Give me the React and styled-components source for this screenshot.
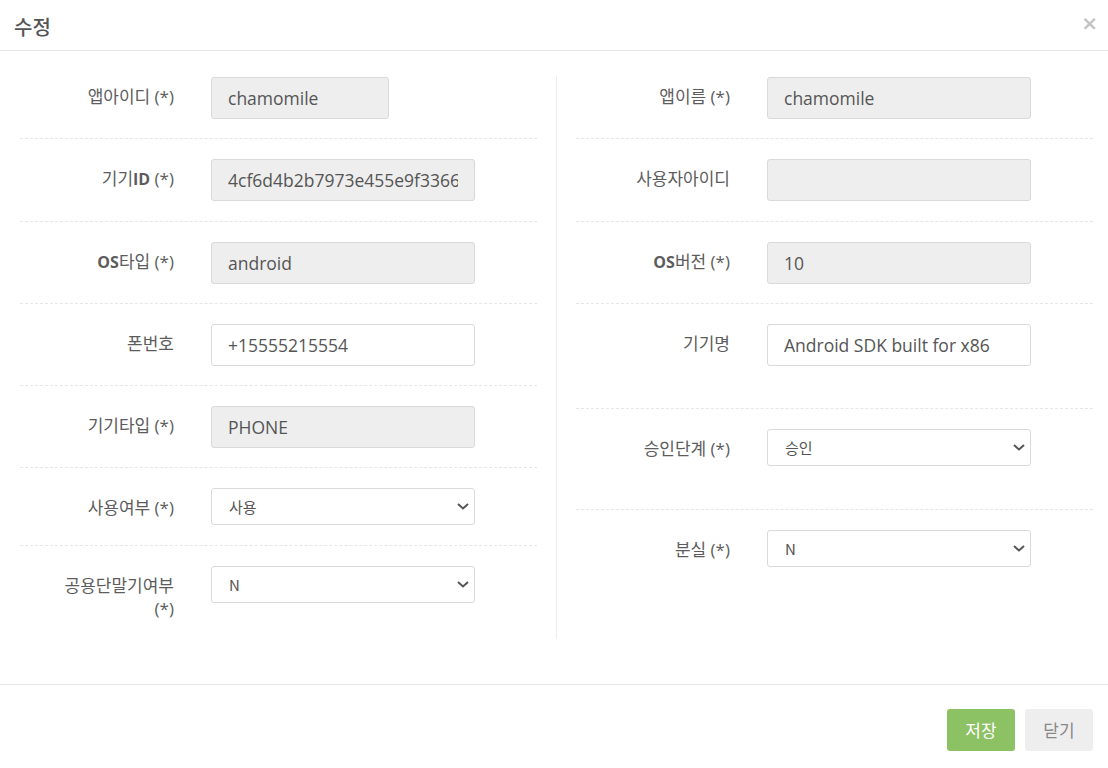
import styled, { createGlobalStyle } from "styled-components";

const GlobalStyle = createGlobalStyle`
    body {
        margin: 0;
        background: #fff;
        font-family: "Open Sans", "Noto Sans CJK KR", sans-serif;
        color: #555;
    }
`

const Modal = styled.div`
    width: 1108px;
    height: 768px;
    display: flex;
    flex-direction: column;
    overflow: hidden;

    & > * {
        flex-shrink: 0;
    }
`

const Header = styled.div`
    box-sizing: border-box;
    height: 51px;
    display: flex;
    align-items: center;
    justify-content: space-between;
    padding: 2px 10px 0 14px;
    border-bottom: 1px solid #e5e5e5;
`

const Title = styled.h4`
    margin: 0;
    font-family: "Noto Sans CJK KR", sans-serif;
    font-size: 20px;
    font-weight: 500;
    color: #555;
`

const CloseButton = styled.button`
    border: none;
    background: none;
    padding: 0;
    margin-top: -6px;
    font-family: "DejaVu Sans", sans-serif;
    font-size: 20px;
    font-weight: bold;
    line-height: 1;
    color: #c4c4c4;
    cursor: pointer;
`

const Body = styled.div`
    display: grid;
    grid-template-columns: 1fr 1px 1fr;
    column-gap: 19px;
    padding: 26px 15px 45px 20px;
`

const Divider = styled.div`
    background: #eeeeee;
    margin-top: -1px;
`

const Column = styled.div`
    display: flex;
    flex-direction: column;
`

const Row = styled.div`
    display: flex;
    align-items: flex-start;
    padding: 20px 0 ${props => props.$extra ? '42.5px' : '19.25px'};

    &:first-child {
        padding-top: 0;
    }

    & + & {
        border-top: 1px dashed #e6e6e6;
    }
`

const Label = styled.label`
    box-sizing: border-box;
    width: 124px;
    margin: 0 37px 0 30px;
    flex-shrink: 0;
    padding-top: 8px;
    text-align: right;
    font-size: 17px;
    line-height: 23px;
    color: #5c5c5c;

    & b {
        font-weight: 700;
        font-size: 16px;
    }
`

const Field = styled.input`
    box-sizing: border-box;
    width: ${props => props.$narrow ? '178px' : '264px'};
    height: 42px;
    padding: 0 16px;
    border: 1px solid #d9d9d9;
    border-radius: 3px;
    background: ${props => props.readOnly ? '#eeeeee' : '#fff'};
    font-family: "Open Sans", sans-serif;
    font-size: 17.5px;
    color: #555;
    outline: none;
`

const SelectWrap = styled.div`
    position: relative;
    width: 264px;

    & svg {
        position: absolute;
        right: 6px;
        top: 15px;
        pointer-events: none;
    }
`

const Select = styled.select`
    appearance: none;
    box-sizing: border-box;
    width: 100%;
    height: 37px;
    padding: 0 30px 0 17px;
    border: 1px solid #d9d9d9;
    border-radius: 3px;
    background: #fff;
    font-family: "Noto Sans CJK KR", sans-serif;
    font-size: 15px;
    color: #555;
    outline: none;
`

const Footer = styled.div`
    display: flex;
    justify-content: flex-end;
    gap: 10px;
    padding: 24px 15px;
    border-top: 1px solid #e5e5e5;
`

const Button = styled.button`
    width: 68px;
    height: 42px;
    border: none;
    border-radius: 3px;
    font-family: "Noto Sans CJK KR", sans-serif;
    font-size: 17px;
    color: ${props => props.$primary ? '#fff' : '#888'};
    background: ${props => props.$primary ? '#8cc164' : '#eeeeee'};
    cursor: pointer;
`

const leftRows = [
    { label: <>앱아이디 (*)</>, value: 'chamomile', readOnly: true, narrow: true },
    { label: <>기기<b>ID</b> (*)</>, value: '4cf6d4b2b7973e455e9f3366', readOnly: true },
    { label: <><b>OS</b>타입 (*)</>, value: 'android', readOnly: true },
    { label: <>폰번호</>, value: '+15555215554' },
    { label: <>기기타입 (*)</>, value: 'PHONE', readOnly: true },
    { label: <>사용여부 (*)</>, options: ['사용', '미사용'] },
    { label: <>공용단말기여부 (*)</>, options: ['N', 'Y'] },
]

const rightRows = [
    { label: <>앱이름 (*)</>, value: 'chamomile', readOnly: true },
    { label: <>사용자아이디</>, value: '', readOnly: true },
    { label: <><b>OS</b>버전 (*)</>, value: '10', readOnly: true },
    { label: <>기기명</>, value: 'Android SDK built for x86', extra: true },
    { label: <>승인단계 (*)</>, options: ['승인', '대기', '반려'], extra: true },
    { label: <>분실 (*)</>, options: ['N', 'Y'] },
]

function Chevron() {
    return (
        <svg width="12" height="7" viewBox="0 0 12 7">
            <polyline points="1,1 6,5.5 11,1" fill="none" stroke="#555" strokeWidth="2" />
        </svg>
    )
}

function FormColumn({ rows }) {
    return (
        <Column>
            {rows.map((row, i) => (
                <Row key={i} $extra={row.extra}>
                    <Label>{row.label}</Label>
                    {row.options ? (
                        <SelectWrap>
                            <Select defaultValue={row.options[0]}>
                                {row.options.map(opt => (
                                    <option key={opt} value={opt}>{opt}</option>
                                ))}
                            </Select>
                            <Chevron />
                        </SelectWrap>
                    ) : (
                        <Field
                            type="text"
                            defaultValue={row.value}
                            readOnly={row.readOnly}
                            $narrow={row.narrow}
                        />
                    )}
                </Row>
            ))}
        </Column>
    )
}

export default function App() {
    return (
        <>
            <GlobalStyle />
            <Modal>
                <Header>
                    <Title>수정</Title>
                    <CloseButton type="button">×</CloseButton>
                </Header>
                <Body>
                    <FormColumn rows={leftRows} />
                    <Divider />
                    <FormColumn rows={rightRows} />
                </Body>
                <Footer>
                    <Button type="button" $primary>저장</Button>
                    <Button type="button">닫기</Button>
                </Footer>
            </Modal>
        </>
    )
}
